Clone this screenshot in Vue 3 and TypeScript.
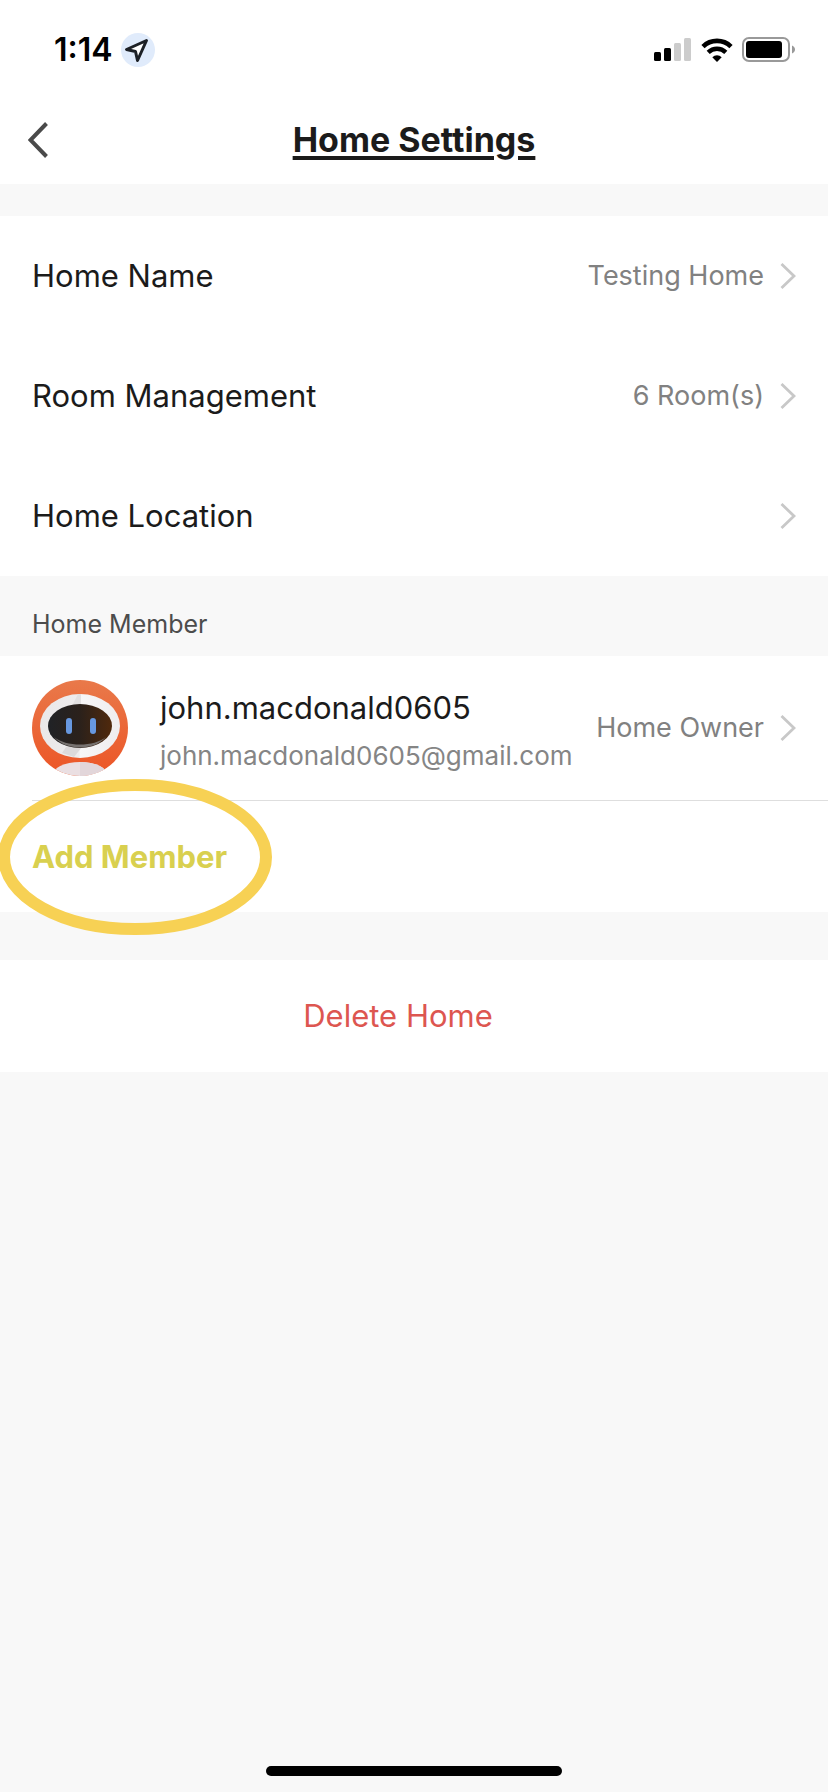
<script setup lang="ts">
interface Setting {
  label: string
  value: string
}

const settings: Setting[] = [
  { label: 'Home Name', value: 'Testing Home' },
  { label: 'Room Management', value: '6 Room(s)' },
  { label: 'Home Location', value: '' },
]

const member = {
  name: 'john.macdonald0605',
  email: 'john.macdonald0605@gmail.com',
  role: 'Home Owner',
}
</script>

<template>
  <div class="screen">
    <div class="status">
      <span class="clock">1:14</span>
      <svg class="location" width="34" height="34" viewBox="0 0 34 34" aria-hidden="true">
        <circle cx="17" cy="17" r="17" fill="#e0ebfb" />
        <path d="M25.500 7.500 5.500 16.500 14.500 18.500 16.500 27.500Z" fill="#fff" stroke="#1c2026" stroke-width="3" stroke-linejoin="round" />
      </svg>
      <svg class="signal" width="38" height="24" viewBox="0 0 38 24" aria-hidden="true">
        <rect x="0" y="14" width="7" height="9" rx="1.500" />
        <rect x="10" y="10" width="7" height="13" rx="1.500" />
        <rect x="20" y="5" width="7" height="18" rx="1.500" fill="#ccc" />
        <rect x="30" y="0" width="7" height="23" rx="1.500" fill="#ccc" />
      </svg>
      <svg class="wifi" width="32" height="24" viewBox="0 0 32 24" aria-hidden="true">
        <path d="M2 8.600A20 20 0 0 1 30 8.600" fill="none" stroke="#000" stroke-width="4.600" />
        <path d="M7.200 14.400A12.500 12.500 0 0 1 24.800 14.400" fill="none" stroke="#000" stroke-width="4.400" />
        <path d="M11.300 19.200A6.800 6.800 0 0 1 20.700 19.200L16 24Z" />
      </svg>
      <svg class="battery" width="54" height="26" viewBox="0 0 54 26" aria-hidden="true">
        <rect x="1" y="1" width="46" height="23" rx="6" fill="none" stroke="#999" stroke-width="2" />
        <rect x="4" y="4" width="36" height="17" rx="3" />
        <path d="M50 8.500C54 10 54 15 50 16.500Z" fill="#999" />
      </svg>
    </div>

    <header class="nav">
      <button class="back" type="button" aria-label="Back">
        <svg width="20" height="36" viewBox="0 0 20 36" aria-hidden="true">
          <path d="M18.500 1.500 2.500 18 18.500 34.500" fill="none" stroke="#4a4a4a" stroke-width="4" />
        </svg>
      </button>
      <h1 class="title">Home Settings</h1>
    </header>

    <main>
      <section class="group">
        <button v-for="item in settings" :key="item.label" class="row" type="button">
          <span class="label">{{ item.label }}</span>
          <span class="value">{{ item.value }}</span>
          <svg class="chevron" width="16" height="26" viewBox="0 0 16 26" aria-hidden="true">
            <path d="M1.500 1 14 13 1.500 25" fill="none" stroke="#c8c8c8" stroke-width="2.800" />
          </svg>
        </button>
      </section>

      <h2 class="heading">Home Member</h2>

      <section class="members">
        <button class="row member" type="button">
          <svg class="avatar" width="96" height="96" viewBox="0 0 96 96" aria-hidden="true">
            <defs>
              <clipPath id="disc"><circle cx="48" cy="48" r="48" /></clipPath>
              <linearGradient id="orange" x1="0" y1="0" x2="0" y2="1">
                <stop offset="0" stop-color="#e9794a" />
                <stop offset="1" stop-color="#ec5526" />
              </linearGradient>
              <linearGradient id="visor" x1="0" y1="0" x2="1" y2="0">
                <stop offset="0" stop-color="#202226" />
                <stop offset="0.500" stop-color="#2b211b" />
                <stop offset="1" stop-color="#50290c" />
              </linearGradient>
              <linearGradient id="shell" x1="0" y1="0" x2="1" y2="0">
                <stop offset="0" stop-color="#eae8e9" />
                <stop offset="0.490" stop-color="#eeeced" />
                <stop offset="0.500" stop-color="#f7f6f7" />
                <stop offset="1" stop-color="#efedee" />
              </linearGradient>
            </defs>
            <g clip-path="url(#disc)">
              <rect width="96" height="96" fill="url(#orange)" />
              <ellipse cx="48" cy="46" rx="40" ry="32" fill="url(#shell)" />
              <path d="M46 14 49 14V24H41Z" fill="#e2e0e1" />
              <path d="M34 67H50L42 77 30 73Z" fill="#dcd9da" />
              <ellipse cx="48" cy="46" rx="32" ry="22" fill="url(#visor)" />
              <path d="M22 57C34 71 62 71 74 57C62 67 34 67 22 57Z" fill="#76716f" />
              <rect x="34" y="38" width="6" height="16" rx="3" fill="#6798e0" />
              <rect x="58" y="38" width="6" height="16" rx="3" fill="#6798e0" />
              <ellipse cx="48" cy="96" rx="28" ry="14" fill="#eadfe2" />
              <path d="M48 82A28 14 0 0 1 76 96H48Z" fill="#e2d6da" />
            </g>
          </svg>
          <span class="person">
            <span class="name">{{ member.name }}</span>
            <span class="email">{{ member.email }}</span>
          </span>
          <span class="value">{{ member.role }}</span>
          <svg class="chevron" width="16" height="26" viewBox="0 0 16 26" aria-hidden="true">
            <path d="M1.500 1 14 13 1.500 25" fill="none" stroke="#c8c8c8" stroke-width="2.800" />
          </svg>
        </button>
        <div class="add-row">
          <button class="add" type="button">Add Member</button>
          <svg class="ring" width="274" height="156" viewBox="0 0 274 156" aria-hidden="true">
            <ellipse cx="137" cy="78" rx="131" ry="72" fill="none" stroke="#f7d154" stroke-width="12" />
          </svg>
        </div>
      </section>

      <button class="delete" type="button">Delete Home</button>
    </main>

    <div class="home-bar"></div>
  </div>
</template>

<style>
html,
body {
  margin: 0;
  background: #f8f8f8;
}
</style>

<style scoped>
.screen {
  display: flex;
  flex-direction: column;
  min-height: 100vh;
  overflow: hidden;
  background: #f8f8f8;
  color: #1b1b1b;
  font-family: Inter, "Liberation Sans", sans-serif;
}

button {
  margin: 0;
  padding: 0;
  border: 0;
  background: none;
  color: inherit;
  font: inherit;
  text-align: left;
  cursor: pointer;
}

svg {
  display: block;
  flex: none;
}

.status {
  display: flex;
  align-items: center;
  box-sizing: border-box;
  height: 96px;
  padding: 4px 32px 0 54px;
  background: #fff;
}

.clock {
  color: #000;
  font-size: 32px;
  font-weight: 600;
  line-height: 36px;
}

.location {
  margin-left: 8px;
}

.signal {
  margin-left: auto;
}

.wifi {
  margin-left: 9px;
}

.battery {
  margin-left: 9px;
}

.nav {
  display: grid;
  grid-template-columns: 72px 1fr 72px;
  align-items: center;
  height: 88px;
  background: #fff;
}

.back {
  padding: 8px 28px;
}

.title {
  margin: 0;
  font-size: 34px;
  font-weight: 700;
  line-height: 40px;
  text-align: center;
  text-decoration: underline;
  text-decoration-thickness: 4px;
  text-underline-offset: 4px;
}

.group {
  margin-top: 32px;
  background: #fff;
}

.row {
  display: flex;
  align-items: center;
  box-sizing: border-box;
  width: 100%;
  height: 120px;
  padding: 0 32px;
}

.label {
  font-size: 31px;
  line-height: 36px;
}

.value {
  margin-left: auto;
  color: #818181;
  font-size: 27px;
  line-height: 32px;
}

.chevron {
  margin-left: 16px;
}

.heading {
  margin: 0;
  padding: 16px 32px 0;
  color: #4c4c4c;
  font-size: 25px;
  font-weight: 400;
  line-height: 64px;
}

.members {
  background: #fff;
}

.member {
  height: 144px;
}

.person {
  display: flex;
  flex-direction: column;
  gap: 8px;
  margin-left: 32px;
  padding-top: 8px;
}

.name {
  font-size: 31px;
  line-height: 40px;
}

.email {
  color: #858585;
  font-size: 26px;
  line-height: 40px;
}

.add-row {
  position: relative;
  margin-left: 32px;
  border-top: 1px solid #dedede;
}

.add {
  display: block;
  width: 100%;
  height: 111px;
  color: #d9d04f;
  font-size: 31px;
  font-weight: 700;
  line-height: 36px;
}

.ring {
  position: absolute;
  top: -22px;
  left: -34px;
  pointer-events: none;
}

.delete {
  display: block;
  box-sizing: border-box;
  width: 100%;
  height: 112px;
  margin-top: 48px;
  padding-right: 32px;
  background: #fff;
  color: #dd5650;
  font-size: 31px;
  line-height: 36px;
  text-align: center;
}

.home-bar {
  width: 296px;
  height: 10px;
  margin: auto auto 16px;
  border-radius: 5px;
  background: #000;
}
</style>
